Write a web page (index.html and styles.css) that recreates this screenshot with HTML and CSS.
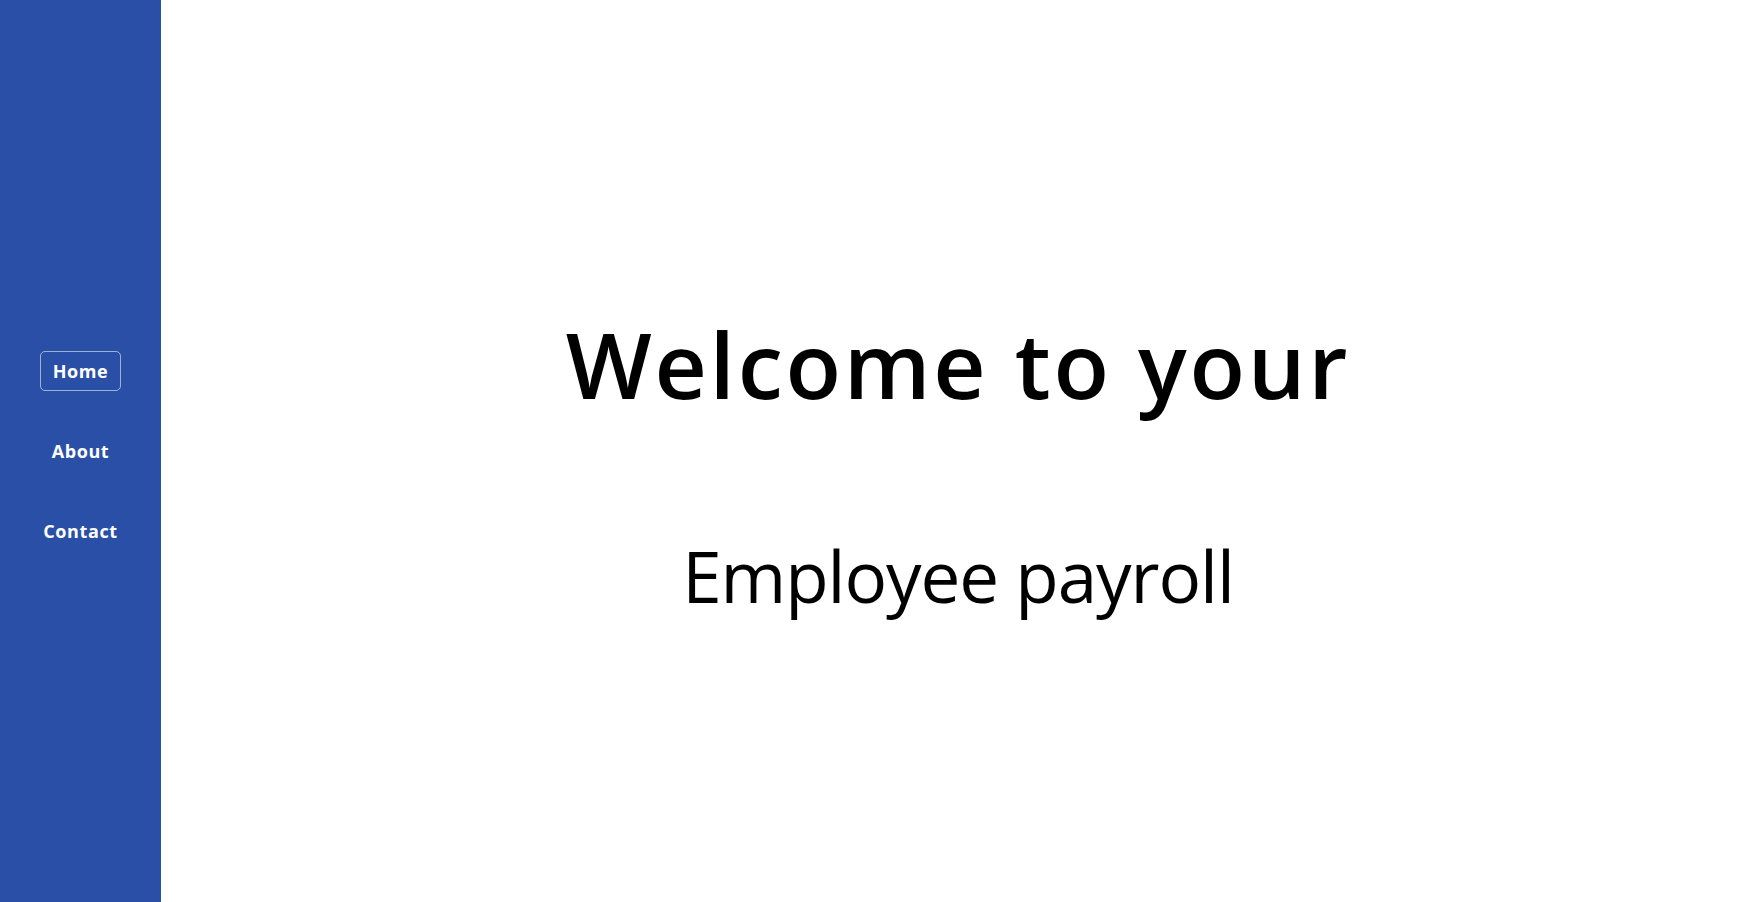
FILE: index.html
```html
<!DOCTYPE html>
<html lang="en">
<head>
<meta charset="utf-8">
<title>Employee payroll</title>
<link rel="stylesheet" href="styles.css">
</head>
<body>
<div class="layout">
  <nav class="sidebar">
    <a class="nav-link active" href="#">Home</a>
    <a class="nav-link" href="#">About</a>
    <a class="nav-link" href="#">Contact</a>
  </nav>
  <main class="content">
    <h1 class="title">Welcome to your</h1>
    <h2 class="subtitle">Employee payroll</h2>
  </main>
</div>
</body>
</html>
```
FILE: styles.css
```css
html, body {
  margin: 0;
  padding: 0;
  height: 100%;
}
body {
  font-family: "Open Sans", "Liberation Sans", sans-serif;
  background: #ffffff;
  color: #000000;
}
.layout {
  display: flex;
  height: 902px;
}
.sidebar {
  width: 161px;
  flex: none;
  background: #2a4fa7;
  display: flex;
  flex-direction: column;
  align-items: center;
  justify-content: center;
  gap: 40px;
}
.nav-link {
  display: flex;
  align-items: center;
  justify-content: center;
  height: 40px;
  box-sizing: border-box;
  padding: 0 12px;
  color: #ffffff;
  text-decoration: none;
  font-size: 18px;
  font-weight: 700;
  letter-spacing: 0.6px;
  border: 1px solid transparent;
  border-radius: 5px;
}
.nav-link.active {
  width: 81px;
  border-color: rgba(255, 255, 255, 0.55);
}
.content {
  flex: 1;
  display: flex;
  flex-direction: column;
  align-items: center;
  justify-content: center;
  padding-top: 27px;
}
.title {
  margin: 0;
  font-size: 91px;
  font-weight: 600;
  letter-spacing: 2.7px;
  line-height: 120px;
}
.subtitle {
  margin: 102px 0 0;
  font-size: 71px;
  font-weight: 400;
  letter-spacing: -1.1px;
  line-height: 100px;
}
```
